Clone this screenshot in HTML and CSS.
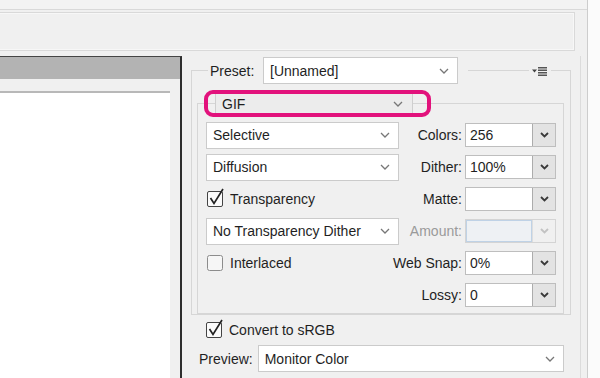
FILE: index.html
```html
<!DOCTYPE html>
<html lang="en">
<head>
    <meta charset="UTF-8">
    <meta name="viewport" content="width=device-width, initial-scale=1.0">
    <title>Save for Web</title>
    <link rel="stylesheet" href="styles.css">
</head>
<body>
<div class="app">
    <div class="workspace">
        <div class="top-rule"></div>
        <div class="toolbar"></div>
        <div class="main">
            <div class="preview">
                <div class="preview-head"></div>
                <div class="preview-canvas"></div>
            </div>
            <div class="settings">
                <fieldset class="group">
                    <legend class="group-head">
                        <span class="head-field">
                            <span class="head-label">Preset:</span>
                            <span class="select preset">
                                <span>[Unnamed]</span>
                                <svg class="chev" width="10" height="6" viewBox="0 0 10 6"><polyline points="1,1 5,5 9,1"/></svg>
                            </span>
                        </span>
                        <span class="head-fill"></span>
                        <span class="menu-icon">
                            <svg width="16" height="10" viewBox="0 0 16 10">
                                <polygon points="0,3.5 5,3.5 2.5,6.5" fill="#444"/>
                                <rect x="6" y="1" width="9" height="1.5" fill="#555"/>
                                <rect x="6" y="3.5" width="9" height="1.5" fill="#555"/>
                                <rect x="6" y="6" width="9" height="1.5" fill="#555"/>
                                <rect x="6" y="8.5" width="9" height="1.5" fill="#555"/>
                            </svg>
                        </span>
                    </legend>

                    <fieldset class="subgroup">
                        <legend class="sub-head">
                            <span class="highlight">
                                <span class="format">
                                    <span>GIF</span>
                                    <svg class="chev" width="10" height="6" viewBox="0 0 10 6"><polyline points="1,1 5,5 9,1"/></svg>
                                </span>
                            </span>
                        </legend>

                        <div class="rows">
                            <div class="row">
                                <div class="select wide"><span>Selective</span><svg class="chev" width="10" height="6" viewBox="0 0 10 6"><polyline points="1,1 5,5 9,1"/></svg></div>
                                <div class="field">
                                    <span>Colors:</span>
                                    <div class="combo"><span class="combo-value">256</span><span class="combo-btn"><svg width="9" height="6" viewBox="0 0 9 6"><polyline points="1,1 4.5,4.5 8,1"/></svg></span></div>
                                </div>
                            </div>
                            <div class="row">
                                <div class="select wide"><span>Diffusion</span><svg class="chev" width="10" height="6" viewBox="0 0 10 6"><polyline points="1,1 5,5 9,1"/></svg></div>
                                <div class="field">
                                    <span>Dither:</span>
                                    <div class="combo"><span class="combo-value">100%</span><span class="combo-btn"><svg width="9" height="6" viewBox="0 0 9 6"><polyline points="1,1 4.5,4.5 8,1"/></svg></span></div>
                                </div>
                            </div>
                            <div class="row">
                                <div class="check">
                                    <svg class="box" width="16" height="16" viewBox="0 0 16 16"><rect x="0.5" y="0.5" width="15" height="15" rx="1.5"/><polyline class="tick" points="3.5,7 7,12.5 16,-2"/></svg>
                                    <span>Transparency</span>
                                </div>
                                <div class="field">
                                    <span>Matte:</span>
                                    <div class="combo"><span class="combo-value"></span><span class="combo-btn"><svg width="9" height="6" viewBox="0 0 9 6"><polyline points="1,1 4.5,4.5 8,1"/></svg></span></div>
                                </div>
                            </div>
                            <div class="row">
                                <div class="select wide"><span>No Transparency Dither</span><svg class="chev" width="10" height="6" viewBox="0 0 10 6"><polyline points="1,1 5,5 9,1"/></svg></div>
                                <div class="field disabled">
                                    <span>Amount:</span>
                                    <div class="combo"><span class="combo-value"></span><span class="combo-btn"><svg width="9" height="6" viewBox="0 0 9 6"><polyline points="1,1 4.5,4.5 8,1"/></svg></span></div>
                                </div>
                            </div>
                            <div class="row">
                                <div class="check">
                                    <svg class="box off" width="16" height="16" viewBox="0 0 16 16"><rect x="0.5" y="0.5" width="15" height="15" rx="2"/></svg>
                                    <span>Interlaced</span>
                                </div>
                                <div class="field">
                                    <span>Web Snap:</span>
                                    <div class="combo"><span class="combo-value">0%</span><span class="combo-btn"><svg width="9" height="6" viewBox="0 0 9 6"><polyline points="1,1 4.5,4.5 8,1"/></svg></span></div>
                                </div>
                            </div>
                            <div class="row">
                                <div class="field">
                                    <span>Lossy:</span>
                                    <div class="combo"><span class="combo-value">0</span><span class="combo-btn"><svg width="9" height="6" viewBox="0 0 9 6"><polyline points="1,1 4.5,4.5 8,1"/></svg></span></div>
                                </div>
                            </div>
                        </div>
                    </fieldset>
                </fieldset>

                <div class="convert">
                    <div class="check">
                        <svg class="box" width="16" height="16" viewBox="0 0 16 16"><rect x="0.5" y="0.5" width="15" height="15" rx="1.5"/><polyline class="tick" points="3.5,7 7,12.5 16,-2"/></svg>
                        <span>Convert to sRGB</span>
                    </div>
                </div>
                <div class="preview-row">
                    <span>Preview:</span>
                    <div class="select monitor"><span>Monitor Color</span><svg class="chev" width="10" height="6" viewBox="0 0 10 6"><polyline points="1,1 5,5 9,1"/></svg></div>
                </div>
            </div>
        </div>
    </div>
    <div class="edge"></div>
</div>
</body>
</html>
```

FILE: styles.css
```css
* {
    box-sizing: border-box;
}
body {
    margin: 0;
    background: #f0f0f0;
    font-family: "Liberation Sans", Arial, sans-serif;
    font-size: 14px;
    color: #1f1f1f;
    overflow: hidden;
}
.app {
    display: flex;
    width: 600px;
    height: 378px;
}
.workspace {
    width: 588px;
    border-right: 1px solid #cdcdcd;
    display: flex;
    flex-direction: column;
}
.edge {
    flex: 1;
    background: #fbfbfb;
}
.top-rule {
    height: 10px;
    background: #f3f3f3;
    border-bottom: 1px solid #d9d9d9;
}
.toolbar {
    height: 39px;
    width: 581px;
    margin: 2px 0 0 -6px;
    border: 1px solid #d9d9d9;
    box-shadow: inset 0 0 0 1px #f7f7f7;
}
.main {
    flex: 1;
    display: flex;
    margin-top: 5px;
    min-height: 0;
}

/* left preview pane */
.preview {
    width: 182px;
    display: flex;
    flex-direction: column;
    border-top: 1px solid #444;
    border-right: 2px solid #2e2e2e;
}
.preview-head {
    height: 22px;
    background: #b3b3b3;
}
.preview-canvas {
    flex: 1;
    margin: 12px 10px 0 0;
    border-top: 2px solid #b8b8b8;
    background: #fff;
}

/* settings column */
.settings {
    flex: 1;
    padding: 0 9px;
    margin-right: 6px;
    border-right: 1px solid #dcdcdc;
}
.group {
    margin: 1px 0 0;
    padding: 0;
    min-width: 0;
    border: 1px solid #d6d6d6;
}
.group-head,
.sub-head {
    width: 100%;
    display: flex;
    align-items: center;
    background: linear-gradient(#d6d6d6, #d6d6d6) 0 50% / 100% 1px no-repeat;
}
.group-head {
    padding: 0 0 0 16px;
}
.head-field {
    display: flex;
    align-items: center;
    background: #f0f0f0;
    padding: 0 10px 0 2px;
}
.head-label {
    width: 53px;
}
.head-fill {
    flex: 1;
}
.menu-icon {
    display: flex;
    background: #f0f0f0;
    padding: 0 3px;
    margin-right: 19px;
}

.select {
    display: flex;
    align-items: center;
    justify-content: space-between;
    height: 27px;
    padding: 0 8px 0 6px;
    background: #fff;
    border: 1px solid #cbcbcb;
}
.preset {
    width: 195px;
}
.wide {
    width: 193px;
}
.monitor {
    width: 306px;
}
.chev polyline {
    fill: none;
    stroke: #777;
    stroke-width: 1.3;
}

.subgroup {
    margin: 6px 6px 0 5px;
    padding: 0;
    min-width: 0;
    border: 1px solid #d6d6d6;
}
.sub-head {
    padding: 0 0 0 6px;
}
.highlight {
    display: flex;
    border: 4px solid #e2127c;
    border-radius: 9px;
    padding: 0 14px 0 7px;
}
.format {
    width: 198px;
    height: 19px;
    display: flex;
    align-items: center;
    justify-content: space-between;
    padding: 0 9px 0 6px;
    background: #ececec;
    border-left: 1px solid #cfcfcf;
    border-right: 1px solid #cfcfcf;
}

.rows {
    padding: 2px 7px 2px 8px;
}
.row {
    height: 32px;
    display: flex;
    align-items: center;
}
.field {
    margin-left: auto;
    display: flex;
    align-items: center;
    gap: 3px;
}
.combo {
    width: 91px;
    height: 24px;
    display: flex;
    background: #fff;
    border: 1px solid #bebebe;
}
.combo-value {
    flex: 1;
    padding-left: 4px;
    line-height: 22px;
}
.combo-btn {
    width: 23px;
    display: flex;
    align-items: center;
    justify-content: center;
    background: #e3e3e3;
    border-left: 1px solid #acacac;
}
.combo-btn polyline {
    fill: none;
    stroke: #3a3a3a;
    stroke-width: 1.8;
}
.disabled {
    color: #9a9a9a;
}
.disabled .combo {
    border-color: #d4d4d4;
    background: #f0f0f0;
}
.disabled .combo-value {
    border: 1px solid #bfd2e6;
    background: #eef1f4;
}
.disabled .combo-btn {
    background: #f0f0f0;
    border-left-color: #dedede;
}
.disabled .combo-btn polyline {
    stroke: #c2c2c2;
}

.check {
    display: flex;
    align-items: center;
    gap: 7px;
    padding-left: 1px;
}
.box {
    overflow: visible;
}
.box rect {
    fill: #fbfbfb;
    stroke: #444;
}
.box.off rect {
    fill: #f6f6f6;
    stroke: #8c8c8c;
}
.tick {
    fill: none;
    stroke: #222;
    stroke-width: 1.7;
}

.convert {
    height: 30px;
    display: flex;
    align-items: center;
    padding-left: 14px;
}
.preview-row {
    display: flex;
    align-items: center;
    gap: 5px;
    padding-left: 8px;
}
```
